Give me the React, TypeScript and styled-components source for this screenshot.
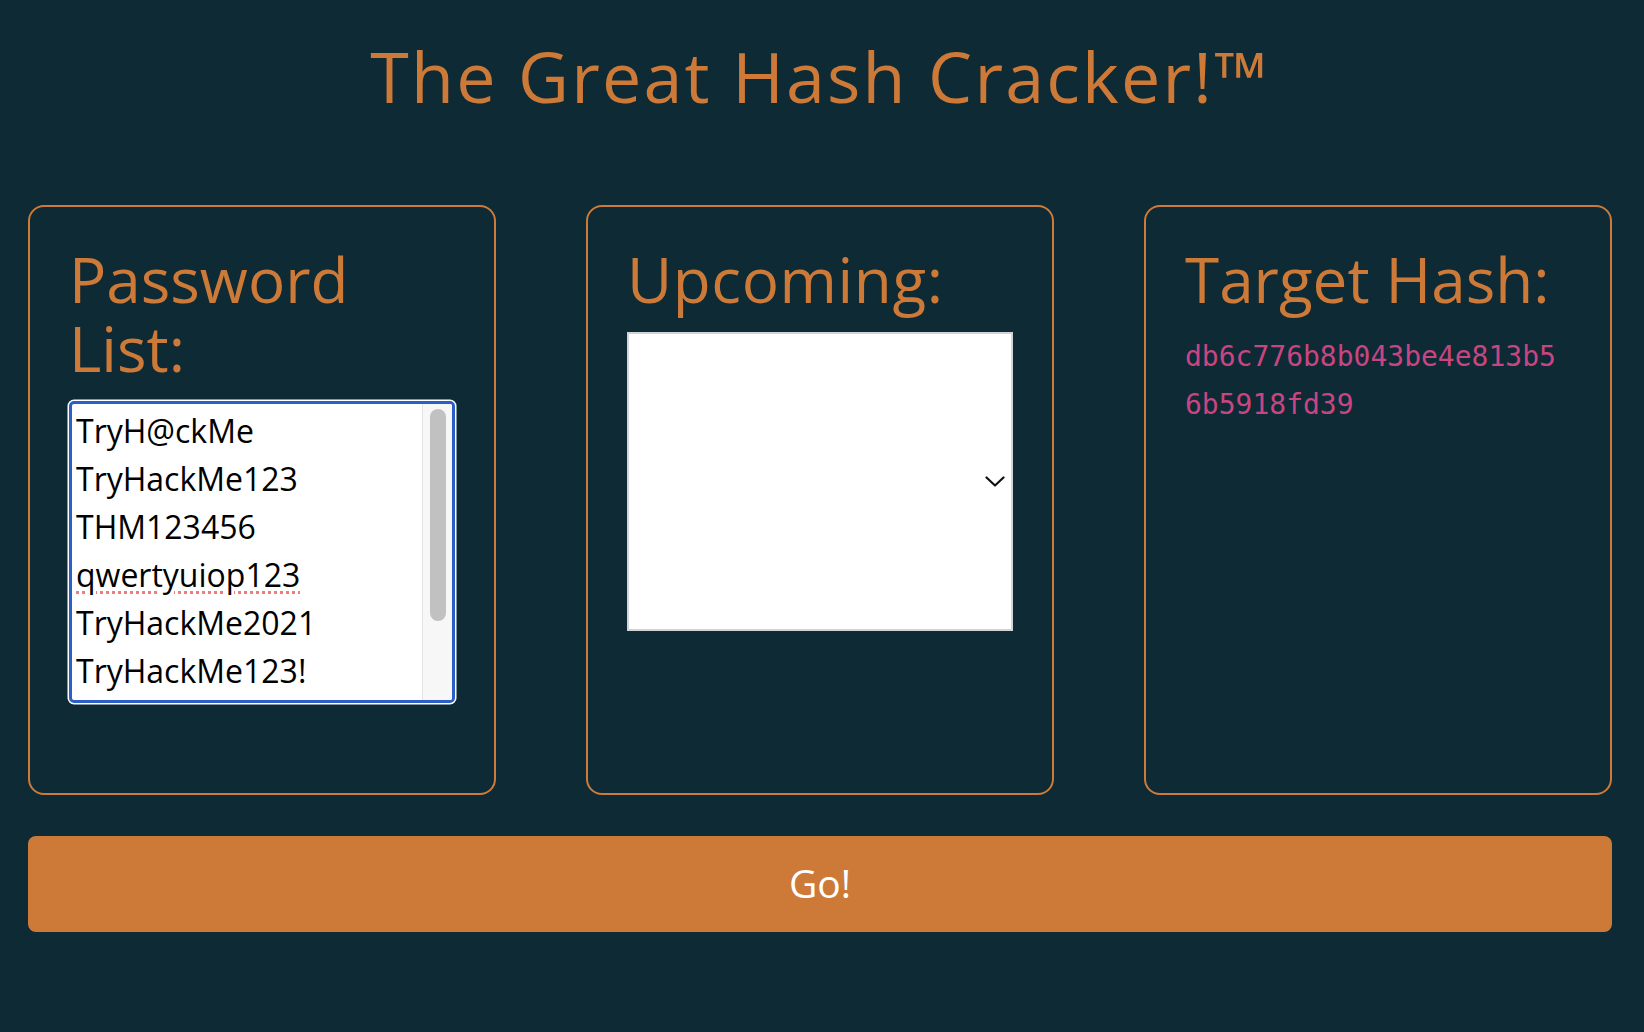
import React from "react";
import styled, { createGlobalStyle } from "styled-components";

const GlobalStyle = createGlobalStyle`
  html, body {
    margin: 0;
    padding: 0;
    background: #0e2a35;
  }
  body {
    font-family: "Open Sans", "DejaVu Sans", sans-serif;
  }
  * { box-sizing: border-box; }
`;

const Page = styled.main`
  min-height: 1032px;
  padding: 34px 32px 0 28px;
  display: flex;
  flex-direction: column;
`;

const Title = styled.h1`
  margin: 0;
  height: 84px;
  font-family: "Open Sans", sans-serif;
  font-weight: 400;
  font-size: 70px;
  line-height: 84px;
  letter-spacing: 2.2px;
  color: #cd7a38;
  text-align: center;
`;

const Cards = styled.section`
  margin-top: 87px;
  display: grid;
  grid-template-columns: repeat(3, 468px);
  column-gap: 90px;
`;

const Card = styled.div`
  height: 590px;
  border: 2px solid #cd7a38;
  border-radius: 16px;
  padding: 38px 39px 0 39px;
  display: flex;
  flex-direction: column;
`;

const CardHeading = styled.h2<{ $spacing?: string }>`
  margin: 0 0 18px 0;
  font-family: "Open Sans", sans-serif;
  font-weight: 400;
  font-size: 62px;
  line-height: 69px;
  color: #cd7a38;
  letter-spacing: ${(p) => p.$spacing ?? "0px"};
`;

const ListBox = styled.div`
  width: 100%;
  height: 302px;
  background: #fff;
  border: 3px solid #2b5fc6;
  border-radius: 5px;
  box-shadow: 0 0 0 1.5px #ffffff;
  overflow: hidden;
  display: flex;
`;

const OptionColumn = styled.div`
  flex: 1;
  min-width: 0;
  padding: 3px 0 0 4px;
`;

const Option = styled.div<{ $misspelled?: boolean }>`
  font-family: "Open Sans", sans-serif;
  font-size: 32px;
  line-height: 48px;
  height: 48px;
  color: #000;
  white-space: nowrap;
  text-decoration: ${(p) => (p.$misspelled ? "underline dotted #ef7d7d" : "none")};
  text-decoration-thickness: 3px;
  text-underline-offset: 4px;
`;

const ScrollTrack = styled.div`
  flex: 0 0 30px;
  background: #f7f7f7;
  border-left: 1px solid #e4e4e4;
  padding: 5px 6px 0 7px;
`;

const ScrollThumb = styled.div`
  height: 212px;
  background: #c1c1c1;
  border-radius: 8px;
`;

const UpcomingSelect = styled.div`
  width: 100%;
  height: 299px;
  background: #fff;
  border: 2px solid #d2d5d7;
  display: flex;
  align-items: center;
  justify-content: flex-end;
  padding-right: 6px;
`;

const HashText = styled.p`
  margin: 1px 0 0 0;
  font-family: "DejaVu Sans Mono", "Liberation Mono", monospace;
  font-size: 28px;
  line-height: 48px;
  color: #c94581;
  word-break: break-all;
`;

const GoButton = styled.button`
  margin-top: 41px;
  width: 1584px;
  height: 96px;
  border: none;
  border-radius: 8px;
  background: #cd7a38;
  color: #fff;
  font-family: "Open Sans", sans-serif;
  font-size: 39px;
  font-weight: 400;
  line-height: 1;
  display: flex;
  align-items: center;
  justify-content: center;
  cursor: pointer;
  padding: 0 0 3px 0;
`;

const Chevron = () => (
  <svg width="20" height="11" viewBox="0 0 20 11" fill="none">
    <polyline points="1.5,1.5 10,9.5 18.5,1.5" stroke="#111" strokeWidth="2.2" strokeLinecap="round" strokeLinejoin="round" />
  </svg>
);

const passwords = [
  "TryH@ckMe",
  "TryHackMe123",
  "THM123456",
  "qwertyuiop123",
  "TryHackMe2021",
  "TryHackMe123!",
];

export default function App() {
  return (
    <>
      <GlobalStyle />
      <Page>
        <Title>The Great Hash Cracker!™</Title>
        <Cards>
          <Card>
            <CardHeading>
              Password
              <br />
              List:
            </CardHeading>
            <ListBox>
              <OptionColumn>
                {passwords.map((p) => (
                  <Option key={p} $misspelled={p === "qwertyuiop123"}>
                    {p}
                  </Option>
                ))}
              </OptionColumn>
              <ScrollTrack>
                <ScrollThumb />
              </ScrollTrack>
            </ListBox>
          </Card>
          <Card>
            <CardHeading $spacing="0.6px">Upcoming:</CardHeading>
            <UpcomingSelect>
              <Chevron />
            </UpcomingSelect>
          </Card>
          <Card>
            <CardHeading>Target Hash:</CardHeading>
            <HashText>db6c776b8b043be4e813b56b5918fd39</HashText>
          </Card>
        </Cards>
        <GoButton>Go!</GoButton>
      </Page>
    </>
  );
}
